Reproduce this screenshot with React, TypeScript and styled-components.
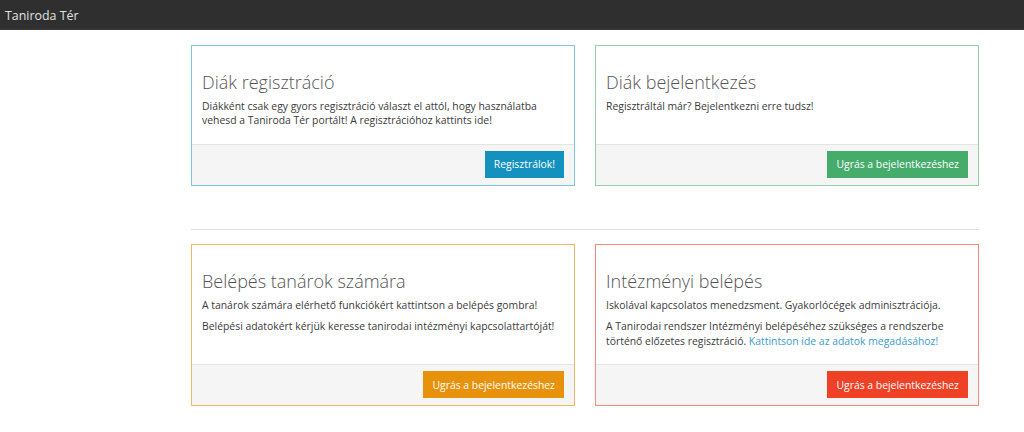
import React from "react";
import styled, { createGlobalStyle } from "styled-components";

const Global = createGlobalStyle`
  html, body { margin: 0; padding: 0; background: #fff; }
  body { font-family: "Open Sans", "Liberation Sans", sans-serif; color: #3c3c3c; }
  * { box-sizing: border-box; }
`;

const Navbar = styled.header`
  height: 30px;
  background: #2f2f2f;
  border-bottom: 1px solid #3a3a3a;
  display: flex;
  align-items: center;
  padding: 3px 0 0 5px;
`;

const Brand = styled.a`
  color: #e2e2e2;
  font-size: 12.4px;
  text-decoration: none;
  line-height: 1;
`;

const Main = styled.main`
  width: 788px;
  margin: 15px 0 0 191px;
`;

const Row = styled.div`
  display: grid;
  grid-template-columns: 384px 384px;
  column-gap: 20px;
`;

const Divider = styled.hr`
  border: 0;
  border-top: 1px solid #e2e2e2;
  margin: 43px 0 14px;
  height: 0;
`;

const Card = styled.section<{ $border: string }>`
  border: 1px solid ${(p) => p.$border};
  display: flex;
  flex-direction: column;
  background: #fff;
`;

const Body = styled.div`
  flex: 1;
  padding: 10px 10px 9px;
`;

const Title = styled.h3`
  margin: 16px 0 7px;
  font-size: 18px;
  line-height: 20px;
  font-weight: 300;
  color: #555;
`;

const Text = styled.p`
  margin: 0 0 7px;
  font-size: 10.4px;
  line-height: 14.4px;
  color: #3b3b3b;
`;

const Link = styled.a`
  color: #3a9ccb;
  text-decoration: none;
`;

const Footer = styled.div`
  background: #f5f5f5;
  border-top: 1px solid #e4e4e4;
  padding: 6px 10px 7px;
  display: flex;
  justify-content: flex-end;
`;

const Button = styled.button<{ $bg: string }>`
  font-family: "Open Sans", "Liberation Sans", sans-serif;
  font-size: 10.4px;
  height: 27px;
  padding: 0 9px;
  border: 0;
  border-radius: 0;
  background: ${(p) => p.$bg};
  color: #fff;
  cursor: pointer;
`;

export default function App() {
  return (
    <>
      <Global />
      <Navbar>
        <Brand href="#">Taniroda Tér</Brand>
      </Navbar>
      <Main>
        <Row>
          <Card $border="#7cc6df">
            <Body>
              <Title>Diák regisztráció</Title>
              <Text>
                Diákként csak egy gyors regisztráció választ el attól, hogy használatba
                <br />
                vehesd a Taniroda Tér portált! A regisztrációhoz kattints ide!
              </Text>
            </Body>
            <Footer>
              <Button $bg="#1591c0">Regisztrálok!</Button>
            </Footer>
          </Card>
          <Card $border="#92d0a8">
            <Body>
              <Title>Diák bejelentkezés</Title>
              <Text>Regisztráltál már? Bejelentkezni erre tudsz!</Text>
            </Body>
            <Footer>
              <Button $bg="#45ac6b">Ugrás a bejelentkezéshez</Button>
            </Footer>
          </Card>
        </Row>
        <Divider />
        <Row>
          <Card $border="#efb866">
            <Body>
              <Title>Belépés tanárok számára</Title>
              <Text>A tanárok számára elérhető funkciókért kattintson a belépés gombra!</Text>
              <Text>Belépési adatokért kérjük keresse tanirodai intézményi kapcsolattartóját!</Text>
            </Body>
            <Footer>
              <Button $bg="#e8920c">Ugrás a bejelentkezéshez</Button>
            </Footer>
          </Card>
          <Card $border="#f48a7b">
            <Body>
              <Title>Intézményi belépés</Title>
              <Text>Iskolával kapcsolatos menedzsment. Gyakorlócégek adminisztrációja.</Text>
              <Text>
                A Tanirodai rendszer Intézményi belépéséhez szükséges a rendszerbe
                <br />
                történő előzetes regisztráció.{" "}
                <Link href="#">Kattintson ide az adatok megadásához!</Link>
              </Text>
            </Body>
            <Footer>
              <Button $bg="#ee4126">Ugrás a bejelentkezéshez</Button>
            </Footer>
          </Card>
        </Row>
      </Main>
    </>
  );
}
